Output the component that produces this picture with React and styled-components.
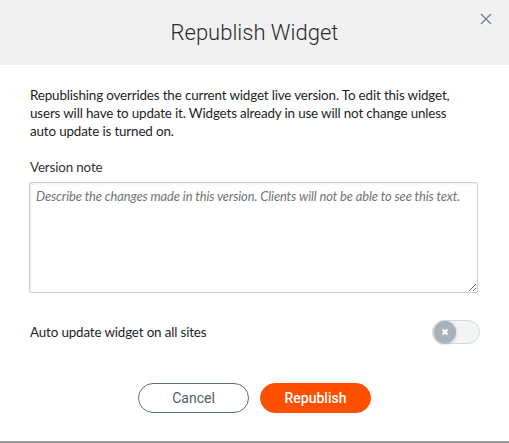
import React from "react";
import styled, {createGlobalStyle} from "styled-components";

const Global = createGlobalStyle`
  html, body {
    margin: 0;
    padding: 0;
    background: #fff;
  }
`

const Modal = styled.div`
  width: 509px;
  height: 443px;
  box-sizing: border-box;
  background: #fff;
  border-bottom: 2px solid #9a9a9a;
  display: flex;
  flex-direction: column;
  font-family: "Lato", "Open Sans", sans-serif;
  color: #222;
`

const Header = styled.div`
  height: 65px;
  background: #f1f1f1;
  display: flex;
  align-items: center;
  justify-content: center;
  position: relative;
`

const Title = styled.h1`
  margin: 0;
  font-family: Roboto, sans-serif;
  font-weight: 300;
  font-size: 22px;
  color: #2b2b2b;
`

const Close = styled.button`
  position: absolute;
  top: 12px;
  right: 16px;
  width: 14px;
  height: 14px;
  padding: 0;
  border: none;
  background: none;
  cursor: pointer;
`

const Body = styled.div`
  padding: 21px 30px 0 30px;
  display: flex;
  flex-direction: column;
`

const Text = styled.p`
  margin: 0;
  max-width: 432px;
  font-size: 13.4px;
  letter-spacing: -0.15px;
  line-height: 18px;
  color: #1e1e1e;
`

const Label = styled.label`
  margin-top: 18px;
  font-size: 13.4px;
  letter-spacing: -0.15px;
  line-height: 18px;
  color: #333;
`

const Note = styled.textarea`
  margin-top: 6px;
  width: 449px;
  height: 111px;
  box-sizing: border-box;
  margin-left: -1px;
  border: 1px solid #c8d1d3;
  border-radius: 2px;
  box-shadow: inset 1px 1px 2px rgba(0, 0, 0, 0.08);
  padding: 5px 6px;
  font-family: "Lato", "Open Sans", sans-serif;
  font-size: 12.9px;
  letter-spacing: -0.1px;
  resize: both;

  &::placeholder {
    color: #747474;
    font-style: italic;
  }
`

const Row = styled.div`
  margin-top: 27px;
  display: flex;
  align-items: center;
  justify-content: space-between;
`

const Switch = styled.div`
  width: 48px;
  height: 24px;
  box-sizing: border-box;
  border: 1px solid #d4dadc;
  border-radius: 12px;
  background: #f3f4f4;
  display: flex;
  align-items: center;
  padding-left: 1px;
  margin-right: -1px;
`

const Knob = styled.div`
  width: 22px;
  height: 22px;
  border-radius: 50%;
  background: #a9b3b7;
  box-shadow: 0 1px 3px rgba(0, 0, 0, 0.25);
  display: flex;
  align-items: center;
  justify-content: center;
`

const Buttons = styled.div`
  margin-top: 39px;
  display: flex;
  justify-content: center;
  gap: 11px;
`

const Button = styled.button`
  width: 111px;
  height: 30px;
  border-radius: 15px;
  font-family: Roboto, sans-serif;
  font-size: 14px;
  cursor: pointer;
  border: 1px solid ${p => p.primary ? "#ff4f00" : "#5e7078"};
  background: ${p => p.primary ? "#ff4f00" : "#fff"};
  color: ${p => p.primary ? "#fff" : "#4e5f66"};
  font-weight: ${p => p.primary ? 500 : 400};
`

export default function App() {
    return (
        <>
            <Global/>
            <Modal>
                <Header>
                    <Title>Republish Widget</Title>
                    <Close aria-label="Close">
                        <svg width="14" height="14" viewBox="0 0 14 14">
                            <path d="M2 2 L12 12 M12 2 L2 12" stroke="#6f7f86" strokeWidth="1.2"/>
                        </svg>
                    </Close>
                </Header>
                <Body>
                    <Text>
                        Republishing overrides the current widget live version. To edit this widget,
                        users will have to update it. Widgets already in use will not change unless
                        auto update is turned on.
                    </Text>
                    <Label>Version note</Label>
                    <Note placeholder="Describe the changes made in this version. Clients will not be able to see this text."/>
                    <Row>
                        <Text>Auto update widget on all sites</Text>
                        <Switch>
                            <Knob>
                                <svg width="8" height="8" viewBox="0 0 8 8">
                                    <path d="M1.5 1.5 L6.5 6.5 M6.5 1.5 L1.5 6.5" stroke="#fff" strokeWidth="2"/>
                                </svg>
                            </Knob>
                        </Switch>
                    </Row>
                    <Buttons>
                        <Button>Cancel</Button>
                        <Button primary>Republish</Button>
                    </Buttons>
                </Body>
            </Modal>
        </>
    );
}
